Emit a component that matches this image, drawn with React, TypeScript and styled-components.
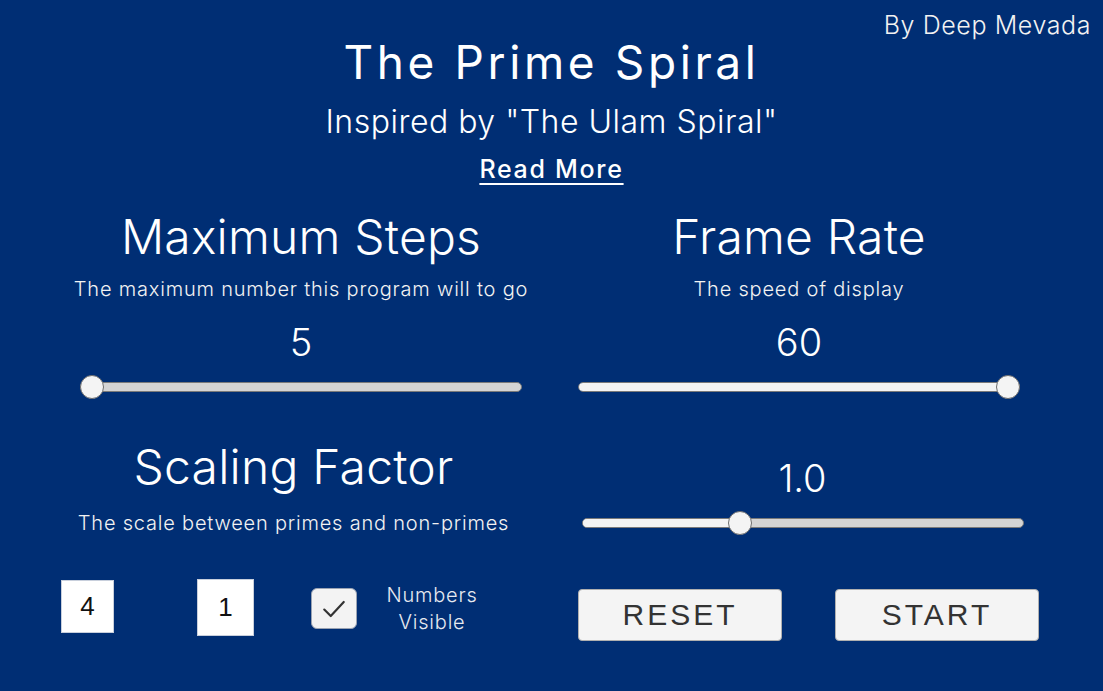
import React from "react";
import styled, { createGlobalStyle } from "styled-components";

const GlobalStyle = createGlobalStyle`
  html, body {
    margin: 0;
    padding: 0;
    background: #002e74;
  }
  body {
    font-family: Inter, "Open Sans", sans-serif;
    color: #ffffff;
  }
`;

const Page = styled.div`
  width: 1103px;
  height: 691px;
  background: #002e74;
  position: relative;
  overflow: hidden;
`;

const Author = styled.div`
  position: absolute;
  top: 10px;
  right: 12px;
  font-size: 25px;
  font-weight: 300;
  letter-spacing: 0.6px;
  line-height: 30px;
  color: #f2f2f2;
`;

const Header = styled.header`
  display: flex;
  flex-direction: column;
  align-items: center;
  padding-top: 35px;
`;

const Title = styled.h1`
  margin: 0;
  font-size: 46px;
  font-weight: 400;
  line-height: 55px;
  letter-spacing: 3.6px;
`;

const Subtitle = styled.h2`
  margin: 12px 0 0;
  font-size: 32px;
  font-weight: 300;
  line-height: 40px;
  letter-spacing: 0.5px;
`;

const ReadMore = styled.a`
  margin-top: 11px;
  font-size: 25px;
  font-weight: 500;
  line-height: 32px;
  letter-spacing: 1.7px;
  color: #ffffff;
  text-decoration: underline;
  text-underline-offset: 5px;
  text-decoration-thickness: 2px;
`;

const Grid = styled.div`
  display: grid;
  grid-template-columns: 498px 498px;
  padding-left: 52px;
`;

const Panel = styled.section<{ $top: number; $shift?: number }>`
  display: flex;
  flex-direction: column;
  align-items: center;
  padding-top: ${(p) => p.$top}px;
  margin-left: ${(p) => p.$shift ?? 0}px;
`;

const Heading = styled.h3`
  margin: 0;
  font-size: 48px;
  font-weight: 300;
  line-height: 56px;
  letter-spacing: 0.2px;
`;

const Desc = styled.p<{ $gap: number }>`
  margin: ${(p) => p.$gap}px 0 0;
  font-size: 20px;
  font-weight: 300;
  line-height: 26px;
  letter-spacing: 0.8px;
  color: #f2f2f2;
`;

const Value = styled.div<{ $gap: number }>`
  margin-top: ${(p) => p.$gap}px;
  font-size: 38px;
  font-weight: 300;
  line-height: 48px;
`;

const SliderWrap = styled.div<{ $gap: number }>`
  margin-top: ${(p) => p.$gap}px;
  width: 442px;
  height: 24px;
  position: relative;
  display: flex;
  align-items: center;
`;

const Track = styled.div`
  width: 100%;
  height: 10px;
  box-sizing: border-box;
  border: 1px solid #7a7a7a;
  border-radius: 5px;
  background: #d4d4d4;
  overflow: hidden;
`;

const Fill = styled.div`
  height: 100%;
  background: #f4f4f4;
`;

const Thumb = styled.div`
  position: absolute;
  top: 0;
  width: 24px;
  height: 24px;
  margin-left: -12px;
  box-sizing: border-box;
  border-radius: 50%;
  border: 1px solid #6d6d6d;
  background: #f4f4f4;
`;

const Slider = ({ pos, gap }: { pos: number; gap: number }) => (
  <SliderWrap $gap={gap}>
    <Track>
      <Fill style={{ width: `${pos * 100}%` }} />
    </Track>
    <Thumb style={{ left: `calc(12px + ${pos} * (100% - 24px))` }} />
  </SliderWrap>
);

const Controls = styled.div`
  display: flex;
  align-items: center;
  padding-top: 40px;
  padding-left: 9px;
`;

const NumBox = styled.div<{ $size: number; $ml: number }>`
  width: ${(p) => p.$size}px;
  height: ${(p) => p.$size}px;
  margin-left: ${(p) => p.$ml}px;
  margin-top: ${(p) => (p.$size === 53 ? -4 : -2)}px;
  box-sizing: border-box;
  background: #ffffff;
  border: 1px solid #c8cfdc;
  display: flex;
  align-items: center;
  justify-content: center;
  font-family: "Liberation Sans", Arial, sans-serif;
  font-size: 26px;
  color: #111;
`;

const CheckBox = styled.div`
  width: 46px;
  height: 41px;
  margin-left: 57px;
  box-sizing: border-box;
  border-radius: 6px;
  border: 1px solid #9aa3b3;
  background: #f3f3f3;
  display: flex;
  align-items: center;
  justify-content: center;
`;

const CheckLabel = styled.div`
  width: 94px;
  margin-left: 28px;
  text-align: center;
  font-size: 20px;
  font-weight: 300;
  line-height: 27px;
  letter-spacing: 0.8px;
  color: #e6e9f0;
`;

const Buttons = styled.div`
  display: flex;
  padding-top: 53px;
  gap: 53px;
  margin-left: 28px;
`;

const Button = styled.button`
  width: 204px;
  height: 52px;
  box-sizing: border-box;
  border: 1px solid #b0b0b0;
  border-radius: 4px;
  background: #f4f4f4;
  font-family: "Liberation Sans", Arial, sans-serif;
  font-size: 30px;
  letter-spacing: 3px;
  color: #333;
  padding: 0;
`;

export default function App() {
  return (
    <Page>
      <GlobalStyle />
      <Author>By Deep Mevada</Author>
      <Header>
        <Title>The Prime Spiral</Title>
        <Subtitle>Inspired by "The Ulam Spiral"</Subtitle>
        <ReadMore>Read More</ReadMore>
      </Header>
      <Grid>
        <Panel $top={24}>
          <Heading>Maximum Steps</Heading>
          <Desc $gap={11}>The maximum number this program will to go</Desc>
          <Value $gap={16}>5</Value>
          <Slider pos={0} gap={9} />
        </Panel>
        <Panel $top={24}>
          <Heading>Frame Rate</Heading>
          <Desc $gap={11}>The speed of display</Desc>
          <Value $gap={16}>60</Value>
          <Slider pos={1} gap={9} />
        </Panel>
        <Panel $top={40} $shift={-15}>
          <Heading>Scaling Factor</Heading>
          <Desc $gap={15}>The scale between primes and non-primes</Desc>
        </Panel>
        <Panel $top={55} $shift={7}>
          <Value $gap={0}>1.0</Value>
          <Slider pos={0.35} gap={9} />
        </Panel>
        <Controls>
          <NumBox $size={53} $ml={0}>4</NumBox>
          <NumBox $size={57} $ml={83}>1</NumBox>
          <CheckBox>
            <svg width="26" height="26" viewBox="0 0 24 24" fill="none" stroke="#333" strokeWidth="2" strokeLinecap="round" strokeLinejoin="round">
              <polyline points="3 12.5 9 18.5 21 5.5" />
            </svg>
          </CheckBox>
          <CheckLabel>Numbers Visible</CheckLabel>
        </Controls>
        <Buttons>
          <Button>RESET</Button>
          <Button>START</Button>
        </Buttons>
      </Grid>
    </Page>
  );
}
